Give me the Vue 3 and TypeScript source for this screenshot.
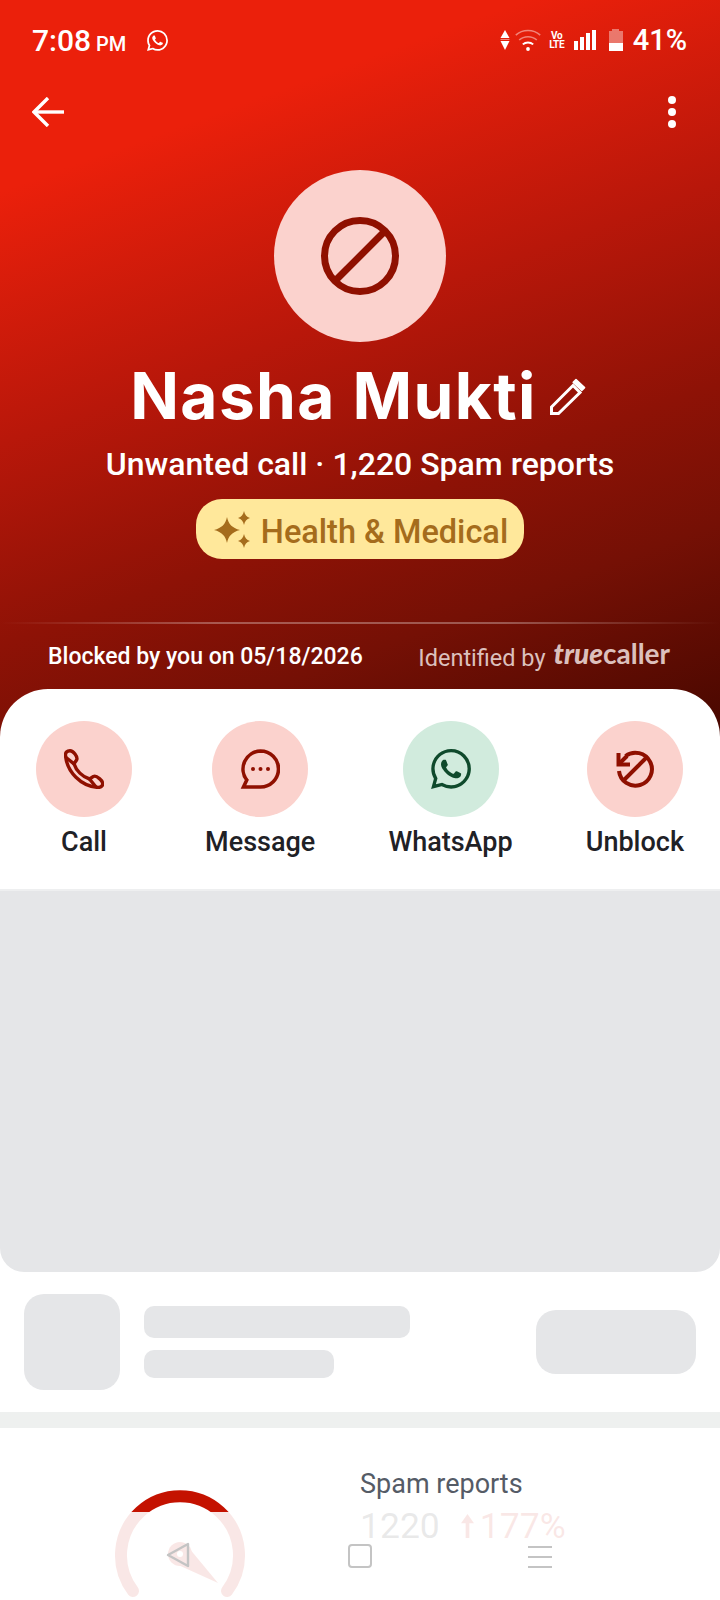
<script setup lang="ts">
const whatsappPath =
  'M17.472 14.382c-.297-.149-1.758-.867-2.03-.967-.273-.099-.471-.148-.67.15-.197.297-.767.966-.94 1.164-.173.199-.347.223-.644.075-.297-.15-1.255-.463-2.39-1.475-.883-.788-1.48-1.761-1.653-2.059-.173-.297-.018-.458.13-.606.134-.133.298-.347.446-.52.149-.174.198-.298.298-.497.099-.198.05-.371-.025-.52-.075-.149-.669-1.612-.916-2.207-.242-.579-.487-.5-.669-.51-.173-.008-.371-.01-.57-.01-.198 0-.52.074-.792.372-.272.297-1.04 1.016-1.04 2.479 0 1.462 1.065 2.875 1.213 3.074.149.198 2.096 3.2 5.077 4.487.709.306 1.262.489 1.694.625.712.227 1.36.195 1.871.118.571-.085 1.758-.719 2.006-1.413.248-.694.248-1.289.173-1.413-.074-.124-.272-.198-.57-.347m-5.421 7.403h-.004a9.87 9.87 0 01-5.031-1.378l-.361-.214-3.741.982.998-3.648-.235-.374a9.86 9.86 0 01-1.51-5.26c.001-5.45 4.436-9.884 9.888-9.884 2.64 0 5.122 1.03 6.988 2.898a9.825 9.825 0 012.893 6.994c-.003 5.45-4.437 9.884-9.885 9.884m8.413-18.297A11.815 11.815 0 0012.05 0C5.495 0 .16 5.335.157 11.892c0 2.096.547 4.142 1.588 5.945L.057 24l6.305-1.654a11.882 11.882 0 005.683 1.448h.005c6.554 0 11.89-5.335 11.893-11.893a11.821 11.821 0 00-3.48-8.413z'

const signalBars = [9, 13, 17, 20]
</script>

<template>
  <div class="page">
    <header class="hero">
      <div class="status-bar">
        <div class="status-left">
          <span class="clock">7:08</span>
          <span class="ampm">PM</span>
          <svg class="status-wa" viewBox="0 0 24 24" fill="#fff"><path :d="whatsappPath" /></svg>
        </div>
        <div class="status-right">
          <svg class="data-arrows" viewBox="0 0 10 20">
            <path d="M5 0 L9.5 8 H0.5 Z" fill="#fff" />
            <path d="M0.5 9.5 H9.5" stroke="#fff" stroke-opacity="0.45" stroke-width="1" />
            <path d="M0.5 11 H9.5 L5 20 Z" fill="#fff" />
          </svg>
          <svg class="wifi" viewBox="0 0 26 22" fill="none" stroke="#fff" stroke-width="1.6">
            <path d="M0.8 6.2 C7.5 0 18.5 0 25.2 6.2" stroke-opacity="0.45" />
            <path d="M4.2 11 C9 6.6 17 6.6 21.8 11" stroke-opacity="0.45" />
            <path d="M7.8 15.4 C10.8 12.8 15.2 12.8 18.2 15.4" stroke-width="1.9" />
            <circle cx="13" cy="20" r="1.9" fill="#fff" stroke="none" />
          </svg>
          <div class="volte"><span>Vo</span><span>LTE</span></div>
          <div class="signal">
            <i v-for="h in signalBars" :key="h" :style="{ height: h + 'px' }"></i>
          </div>
          <div class="battery"><i class="battery-tip"></i><i class="battery-body"><b></b></i></div>
          <span class="percent">41%</span>
        </div>
      </div>

      <div class="toolbar">
        <svg class="back" viewBox="0 0 32 30" fill="none" stroke="#fff" stroke-width="3.4">
          <path d="M32 15 H2" />
          <path d="M16 1 L2 15 L16 29" />
        </svg>
        <div class="more"><i></i><i></i><i></i></div>
      </div>

      <div class="avatar">
        <svg viewBox="0 0 80 80" width="80" height="80" fill="none" stroke="#8f1000" stroke-width="7">
          <circle cx="40" cy="40" r="35.5" />
          <path d="M15 65 L65 15" />
        </svg>
      </div>

      <div class="name-row">
        <h1 class="name">Nasha Mukti</h1>
        <svg class="pencil" viewBox="0 0 36 37" fill="none" stroke="#fff" stroke-width="3">
          <path d="M1.5 29 L23 7.5 L30 14.5 L8.5 35.5 H1.5 Z" stroke-linejoin="miter" />
          <path d="M26 1.6 L34.6 9.6 L31.8 12.4 L23.2 4.4 Z" fill="#fff" stroke-width="1.5" stroke-linejoin="round" />
        </svg>
      </div>

      <p class="subtitle">Unwanted call · 1,220 Spam reports</p>

      <div class="pill">
        <svg class="sparkles" viewBox="0 0 36 37" fill="#a56c1c">
          <path d="M13 6 C14.5 13 18 17 26 19 C18 21 14.5 25 13 32 C11.5 25 8 21 0 19 C8 17 11.5 13 13 6 Z" />
          <path d="M30 0 C30.8 3.5 32.5 6 36 7 C32.5 8 30.8 10.5 30 14 C29.2 10.5 27.5 8 24 7 C27.5 6 29.2 3.5 30 0 Z" />
          <path d="M30 23 C30.8 26.5 32.5 29 36 30 C32.5 31 30.8 33.5 30 37 C29.2 33.5 27.5 31 24 30 C27.5 29 29.2 26.5 30 23 Z" />
        </svg>
        <span>Health &amp; Medical</span>
      </div>

      <div class="hero-rule"></div>

      <div class="hero-foot">
        <span class="blocked">Blocked by you on 05/18/2026</span>
        <span class="identified">
          Identified by
          <span class="brand"><em>true</em>caller</span>
        </span>
      </div>
    </header>

    <section class="sheet">
      <div class="actions">
        <div class="action">
          <div class="action-circle">
            <svg viewBox="0 0 40 40" fill="none" stroke="#8f1000" stroke-width="3.4" stroke-linejoin="round">
              <path d="M6 1.7 C3 1.7 1.2 3.6 1.5 6.5 C3 23 17 37.5 34 38.4 C37 38.5 39 36.6 38.6 34 C38.3 32 37 31 35.4 29.6 C33.4 27.8 31.5 26.4 29.5 27.4 L25.5 30 C18.5 28 12 21.5 10 14.8 L12.6 11 C13.6 9 12.4 6.8 11 5 C9.5 3 8.2 1.7 6 1.7 Z" />
              <path d="M2 8.5 L10 14.8 M25.5 30 L32 38" />
            </svg>
          </div>
          <span>Call</span>
        </div>
        <div class="action">
          <div class="action-circle">
            <svg viewBox="0 0 40 40" fill="none" stroke="#8f1000" stroke-width="3.6">
              <path d="M20.5 2 A18 18 0 1 1 20.5 38 H3.5 L6.8 31 A18 18 0 0 1 20.5 2 Z" />
              <circle cx="13" cy="20" r="2" fill="#8f1000" stroke="none" />
              <circle cx="20.5" cy="20" r="2" fill="#8f1000" stroke="none" />
              <circle cx="28" cy="20" r="2" fill="#8f1000" stroke="none" />
            </svg>
          </div>
          <span>Message</span>
        </div>
        <div class="action">
          <div class="action-circle green">
            <svg viewBox="0 0 24 24" fill="#0f4a2c"><path :d="whatsappPath" /></svg>
          </div>
          <span>WhatsApp</span>
        </div>
        <div class="action">
          <div class="action-circle">
            <svg viewBox="0 0 40 40" fill="none" stroke="#8f1000" stroke-width="4">
              <path d="M10.5 7 A16.5 16.5 0 1 1 4 22" />
              <path d="M3.5 4 V15.5 H15" />
              <path d="M3.5 15.5 L12 7" />
              <path d="M31.5 8.5 L8.5 31.5" />
            </svg>
          </div>
          <span>Unblock</span>
        </div>
      </div>

      <div class="media-placeholder"></div>

      <div class="skeleton-row">
        <div class="sk-thumb"></div>
        <div class="sk-lines">
          <div class="sk-line long"></div>
          <div class="sk-line short"></div>
        </div>
        <div class="sk-button"></div>
      </div>

      <div class="band"></div>

      <div class="stats">
        <svg class="gauge" viewBox="0 0 132 120" fill="none">
          <path d="M19 103 A59 59 0 1 1 113 103" stroke="#c41200" stroke-width="12" stroke-linecap="round" />
          <circle cx="66" cy="66" r="12" fill="#c41200" />
          <path d="M72.7 57.3 L104 95 L59.3 74.7 Z" fill="#c41200" />
          <circle cx="66" cy="66" r="3" fill="#fff" />
        </svg>
        <div class="stats-text">
          <div class="stats-label">Spam reports</div>
          <div class="stats-values">
            <span class="count">1220</span>
            <span class="delta">
              <svg class="delta-arrow" viewBox="0 0 14 26" fill="#c41200">
                <path d="M7 0 L14 10 H9 V26 H5 V10 H0 Z" />
              </svg>
              177%
            </span>
          </div>
        </div>
      </div>
    </section>

    <nav class="nav-bar">
      <svg class="nav-back" viewBox="0 0 24 26" fill="none" stroke="#c4c4c4" stroke-width="2.4" stroke-linejoin="round">
        <path d="M22 2 V24 L2 13 Z" />
      </svg>
      <div class="nav-home"></div>
      <div class="nav-menu"><i></i><i></i><i></i></div>
    </nav>
  </div>
</template>

<style>
html,
body {
  margin: 0;
  background: #fff;
}
</style>

<style scoped>
.page {
  position: relative;
  width: 720px;
  height: 1600px;
  overflow: hidden;
  background: #fff;
  font-family: Roboto, 'Liberation Sans', sans-serif;
}

.hero {
  height: 745px;
  box-sizing: border-box;
  display: flex;
  flex-direction: column;
  color: #fff;
  background: linear-gradient(160deg, #eb200b 19%, #b8170a 44%, #8e1206 64%, #751005 78%, #4a0800 98%);
}

.status-bar {
  height: 80px;
  padding: 0 33px 0 32px;
  display: flex;
  align-items: center;
  justify-content: space-between;
}

.status-left {
  display: flex;
  align-items: baseline;
}

.clock {
  font-size: 30px;
  font-weight: 500;
}

.ampm {
  font-size: 20px;
  font-weight: 500;
  margin-left: 5px;
}

.status-wa {
  width: 21px;
  height: 21px;
  margin-left: 21px;
  align-self: center;
}

.status-right {
  display: flex;
  align-items: center;
}

.data-arrows {
  width: 10px;
  height: 20px;
}

.wifi {
  width: 26px;
  height: 22px;
  margin-left: 5px;
}

.volte {
  display: flex;
  flex-direction: column;
  align-items: center;
  width: 14px;
  margin-left: 9px;
  font-size: 10px;
  font-weight: 700;
  line-height: 9px;
  letter-spacing: -0.4px;
}

.signal {
  display: flex;
  align-items: flex-end;
  gap: 2px;
  height: 20px;
  margin-left: 10px;
}

.signal i {
  display: block;
  width: 4px;
  background: #fff;
}

.battery {
  display: flex;
  flex-direction: column;
  align-items: center;
  margin-left: 13px;
}

.battery-tip {
  display: block;
  width: 7px;
  height: 2px;
  background: rgba(255, 255, 255, 0.4);
}

.battery-body {
  display: flex;
  align-items: flex-end;
  width: 14px;
  height: 20px;
  background: rgba(255, 255, 255, 0.4);
}

.battery-body b {
  display: block;
  width: 100%;
  height: 8px;
  background: #fff;
}

.percent {
  font-size: 29px;
  font-weight: 500;
  margin-left: 10px;
}

.toolbar {
  height: 64px;
  padding: 0 44px 0 32px;
  display: flex;
  align-items: center;
  justify-content: space-between;
}

.back {
  width: 32px;
  height: 30px;
}

.more {
  display: flex;
  flex-direction: column;
  gap: 4px;
}

.more i {
  display: block;
  width: 8px;
  height: 8px;
  border-radius: 50%;
  background: #fff;
}

.avatar {
  width: 172px;
  height: 172px;
  margin: 26px auto 0;
  border-radius: 50%;
  background: #fbd2cd;
  display: flex;
  align-items: center;
  justify-content: center;
}

.name-row {
  display: flex;
  align-items: center;
  justify-content: center;
  margin-top: 16px;
  padding-right: 4px;
}

.name {
  margin: 0;
  font-family: Inter, 'Liberation Sans', sans-serif;
  font-size: 64px;
  line-height: 76px;
  font-weight: 700;
  letter-spacing: 1.4px;
}

.pencil {
  width: 36px;
  height: 37px;
  margin-left: 13px;
}

.subtitle {
  margin: 10px 0 0;
  text-align: center;
  font-size: 32px;
  line-height: 40px;
  font-weight: 500;
}

.pill {
  align-self: center;
  display: flex;
  align-items: center;
  height: 60px;
  margin-top: 15px;
  padding: 0 16px 0 18px;
  border-radius: 26px;
  background: #ffe89b;
  color: #a56c1c;
  font-size: 32.5px;
  font-weight: 500;
}

.pill span {
  margin-top: 5px;
}

.sparkles {
  width: 36px;
  height: 37px;
  margin-right: 11px;
}

.hero-rule {
  height: 2px;
  margin-top: 63px;
  background: linear-gradient(90deg, rgba(255, 255, 255, 0), rgba(255, 255, 255, 0.3) 30%, rgba(255, 255, 255, 0.3) 70%, rgba(255, 255, 255, 0));
}

.hero-foot {
  display: flex;
  align-items: center;
  justify-content: space-between;
  padding: 16px 50px 0 48px;
}

.blocked {
  font-size: 23px;
  font-weight: 500;
}

.identified {
  font-size: 23.5px;
  color: #dcc0bd;
  display: flex;
  align-items: center;
  gap: 8px;
  margin-top: 4px;
}

.brand {
  font-family: Lato, Roboto, sans-serif;
  font-size: 28px;
  font-weight: 700;
  line-height: 28px;
  margin-top: -10px;
}

.brand em {
  font-weight: 900;
  font-style: italic;
}

.sheet {
  position: relative;
  margin-top: -56px;
  background: #fff;
  border-radius: 48px 48px 0 0;
}

.actions {
  display: flex;
  justify-content: space-between;
  padding: 32px 36px 0;
  height: 200px;
  box-sizing: border-box;
}

.action {
  display: flex;
  flex-direction: column;
  align-items: center;
  min-width: 96px;
  font-size: 27px;
  line-height: 34px;
  font-weight: 500;
  color: #1f2126;
}

.action-circle {
  width: 96px;
  height: 96px;
  border-radius: 50%;
  margin-bottom: 8px;
  background: #fbd2cd;
  display: flex;
  align-items: center;
  justify-content: center;
}

.action-circle.green {
  background: #d1ebdd;
}

.action-circle svg {
  width: 40px;
  height: 40px;
}

.media-placeholder {
  height: 383px;
  background: #e5e6e8;
  border-top: 2px solid #eeeff0;
  box-sizing: border-box;
  border-radius: 0 0 24px 24px;
}

.skeleton-row {
  height: 140px;
  box-sizing: border-box;
  padding: 0 24px;
  display: flex;
  align-items: center;
}

.sk-thumb {
  width: 96px;
  height: 96px;
  border-radius: 20px;
  background: #e5e6e8;
}

.sk-lines {
  display: flex;
  flex-direction: column;
  gap: 12px;
  margin-left: 24px;
}

.sk-line {
  border-radius: 10px;
  background: #e5e6e8;
}

.sk-line.long {
  width: 266px;
  height: 32px;
}

.sk-line.short {
  width: 190px;
  height: 28px;
}

.sk-button {
  width: 160px;
  height: 64px;
  margin-left: auto;
  border-radius: 20px;
  background: #e5e6e8;
}

.band {
  height: 16px;
  background: #eef0ef;
}

.stats {
  display: flex;
  padding: 60px 0 0 114px;
}

.gauge {
  width: 132px;
  height: 120px;
}

.stats-text {
  margin-left: 114px;
  margin-top: -24px;
}

.stats-label {
  font-size: 27px;
  line-height: 40px;
  color: #555b66;
}

.stats-values {
  display: flex;
  align-items: center;
  gap: 21px;
  font-size: 35.5px;
  line-height: 44px;
}

.count {
  color: #1f2126;
}

.delta {
  display: flex;
  align-items: center;
  gap: 6px;
  color: #c41200;
}

.delta-arrow {
  width: 13px;
  height: 26px;
}

/* translucent system navigation bar lying over the page */
.nav-bar {
  position: absolute;
  left: 0;
  right: 0;
  top: 1512px;
  bottom: 0;
  background: rgba(255, 255, 255, 0.9);
}

.nav-back {
  position: absolute;
  left: 166px;
  top: 30px;
  width: 24px;
  height: 26px;
}

.nav-home {
  position: absolute;
  left: 348px;
  top: 32px;
  width: 24px;
  height: 24px;
  box-sizing: border-box;
  border: 2px solid #c4c4c4;
  border-radius: 4px;
}

.nav-menu {
  position: absolute;
  left: 528px;
  top: 34px;
  display: flex;
  flex-direction: column;
  gap: 8px;
}

.nav-menu i {
  display: block;
  width: 24px;
  height: 2px;
  background: #c4c4c4;
}
</style>
